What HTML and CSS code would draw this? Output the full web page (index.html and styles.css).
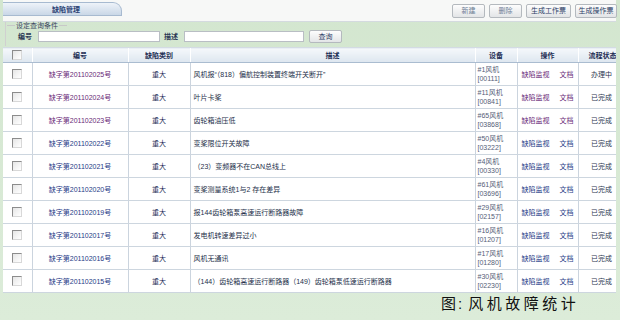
FILE: index.html
```html
<!DOCTYPE html>
<html lang="zh-CN">
<head>
    <meta charset="UTF-8">
    <title>缺陷管理</title>
    <link rel="stylesheet" href="styles.css">
</head>
<body>
    <div class="page">
        <div class="toolbar">
            <div class="tab">缺陷管理</div>
            <div class="actions">
                <span class="btn btn-light w33">新建</span>
                <span class="btn btn-light w33">删除</span>
                <span class="btn w45">生成工作票</span>
                <span class="btn w42">生成操作票</span>
            </div>
        </div>

        <div class="query">
            <div class="legend"><span class="dash"></span>设定查询条件<span class="dash"></span></div>
            <div class="query-row">
                <label>编号</label>
                <span class="input w122"></span>
                <label>描述</label>
                <span class="input w120"></span>
                <span class="btn btn-query">查询</span>
            </div>
        </div>

        <table class="grid">
            <thead>
                <tr>
                    <th class="c-check"><span class="cb"></span></th>
                    <th class="c-no">编号</th>
                    <th class="c-type">缺陷类别</th>
                    <th class="c-desc">描述</th>
                    <th class="c-dev">设备</th>
                    <th class="c-op">操作</th>
                    <th class="c-state">流程状态</th>
                </tr>
            </thead>
            <tbody id="rows"></tbody>
        </table>

        <div class="caption"><span class="fig">图:</span><span class="title">风机故障统计</span></div>
    </div>

    <script>
        // 缺陷列表数据
        const defects = [
            ['201102025', '风机报“（818）偏航控制装置终端开关断开”', '#1风机', '00111', '办理中', true],
            ['201102024', '叶片卡桨', '#11风机', '00841', '已完成', true],
            ['201102023', '齿轮箱油压低', '#65风机', '03868', '已完成', true],
            ['201102022', '变桨限位开关故障', '#50风机', '03222', '已完成', false],
            ['201102021', '（23）变频器不在CAN总线上', '#4风机', '00330', '已完成', false],
            ['201102020', '变桨测量系统1与2 存在差异', '#61风机', '03696', '已完成', false],
            ['201102019', '报144齿轮箱泵高速运行断路器故障', '#29风机', '02157', '已完成', false],
            ['201102017', '发电机转速差异过小', '#16风机', '01207', '已完成', false],
            ['201102016', '风机无通讯', '#17风机', '01280', '已完成', false],
            ['201102015', '（144）齿轮箱高速运行断路器（149）齿轮箱泵低速运行断路器', '#30风机', '02230', '已完成', false]
        ];

        const tbody = document.getElementById('rows');
        defects.forEach(d => {
            const tr = document.createElement('tr');
            if (d[5]) tr.className = 'visited';
            tr.innerHTML =
                '<td class="c-check"><span class="cb"></span></td>' +
                '<td class="c-no"><a>缺字第' + d[0] + '号</a></td>' +
                '<td class="c-type">重大</td>' +
                '<td class="c-desc">' + d[1] + '</td>' +
                '<td class="c-dev">' + d[2] + '<br>[' + d[3] + ']</td>' +
                '<td class="c-op"><a>缺陷监视</a><a>文档</a></td>' +
                '<td class="c-state">' + d[4] + '</td>';
            tbody.appendChild(tr);
        });
    </script>
</body>
</html>
```

FILE: styles.css
```css
/* 缺陷管理页面 */
body {
    margin: 0;
    width: 620px;
    height: 320px;
    overflow: hidden;
    background: linear-gradient(#d3e6cf, #dcecd9);
    font-family: "Liberation Sans", "Noto Sans CJK SC", sans-serif;
    font-size: 7px;
    color: #233;
}

.page {
    margin-left: 3px;
    width: 613px;
}

.toolbar {
    display: flex;
    justify-content: space-between;
    height: 22px;
    background: #f7f8f7;
    border-bottom: 1px solid #d4dadf;
    box-sizing: border-box;
}

.tab {
    margin-top: 2px;
    width: 119px;
    height: 14px;
    line-height: 13px;
    padding-left: 8px;
    text-align: center;
    font-weight: bold;
    color: #2d4476;
    background: linear-gradient(#eef3f9, #c9d7e7);
    border: 1px solid #a7bad0;
    border-left: none;
    border-radius: 0 9px 0 0;
    box-sizing: border-box;
}

.actions {
    display: flex;
    gap: 4px;
    padding-top: 4px;
    margin-right: -1px;
}

.btn {
    height: 14px;
    line-height: 12px;
    text-align: center;
    white-space: nowrap;
    color: #2b3d66;
    background: linear-gradient(#fdfdfd, #e3e5e7);
    border: 1px solid #b4b9be;
    border-radius: 2px;
    box-sizing: border-box;
}

.btn-light {
    color: #6d7e95;
}

.w33 { width: 33px; }
.w45 { width: 45px; }
.w42 { width: 42px; }

.query {
    height: 24px;
    margin-left: 2px;
    border-left: 1px solid #d0d0d0;
    box-sizing: border-box;
}

.legend {
    display: flex;
    align-items: center;
    height: 6px;
    color: #3a4660;
}

.legend .dash {
    width: 8px;
    border-top: 1px solid #c8c8c8;
    margin: 0 1px;
}

.query-row {
    display: flex;
    align-items: center;
    height: 14px;
    margin-top: 1px;
}

.query-row label {
    font-weight: bold;
    color: #2d3a55;
}

.query-row label:first-child {
    margin-left: 12px;
    margin-right: 6px;
}

.query-row label:nth-child(3) {
    margin-left: 4px;
    margin-right: 6px;
}

.input {
    height: 11px;
    background: #fff;
    border: 1px solid #b9bec4;
    box-sizing: border-box;
}

.w122 { width: 122px; }
.w120 { width: 120px; }

.btn-query {
    width: 33px;
    margin-left: 5px;
    height: 13px;
}

.grid {
    width: 613px;
    margin-top: 1px;
    border-collapse: collapse;
    table-layout: fixed;
    background: #fff;
}

.grid th {
    height: 15px;
    padding: 0;
    font-weight: bold;
    white-space: nowrap;
    overflow: hidden;
    color: #1f2f55;
    background: linear-gradient(#f5f8fb, #dde6ef);
    border-top: 1px solid #d3dbe3;
    border-bottom: 1px solid #aabcd0;
    border-left: 1px solid #fff;
    box-sizing: border-box;
}

.grid td {
    height: 23px;
    padding: 0;
    white-space: nowrap;
    overflow: hidden;
    border-bottom: 1px solid #cdd6df;
    border-left: 1px solid #cbd4de;
    box-sizing: border-box;
}

.grid th:first-child,
.grid td:first-child {
    border-left: none;
}

.c-check { width: 29px; text-align: center; }
.c-no { width: 96px; text-align: center; }
.c-type { width: 62px; text-align: center; }
.c-desc { width: 285px; }
.c-dev { width: 42px; }
.c-op { width: 61px; }
.c-state { text-align: right; }

.grid th.c-desc { text-align: center; }
.grid th.c-state { text-align: left; padding-left: 10px; }

td.c-no a { color: #263a86; }
td.c-type { color: #1d2d58; }
td.c-desc { padding-left: 3px; color: #25304a; }
td.c-dev { padding-left: 2px; color: #566078; line-height: 9px; }
td.c-op { padding-left: 4px; }
td.c-op a { color: #263a86; margin-right: 10px; }
td.c-state { padding-right: 4px; color: #2c3650; }

.visited td.c-no a,
.visited td.c-op a {
    color: #6a2a78;
}

.cb {
    display: inline-block;
    width: 10px;
    height: 10px;
    vertical-align: middle;
    background: linear-gradient(135deg, #e6e6e6, #fff);
    border: 1px solid;
    border-color: #8c8c8c #d8d8d8 #d8d8d8 #8c8c8c;
    box-sizing: border-box;
}

.caption {
    display: flex;
    padding-left: 438px;
    font-size: 15px;
    line-height: 22px;
    color: #111;
}

.caption .fig {
    letter-spacing: 2px;
}

.caption .title {
    margin-left: 4px;
    letter-spacing: 3.5px;
}
```
